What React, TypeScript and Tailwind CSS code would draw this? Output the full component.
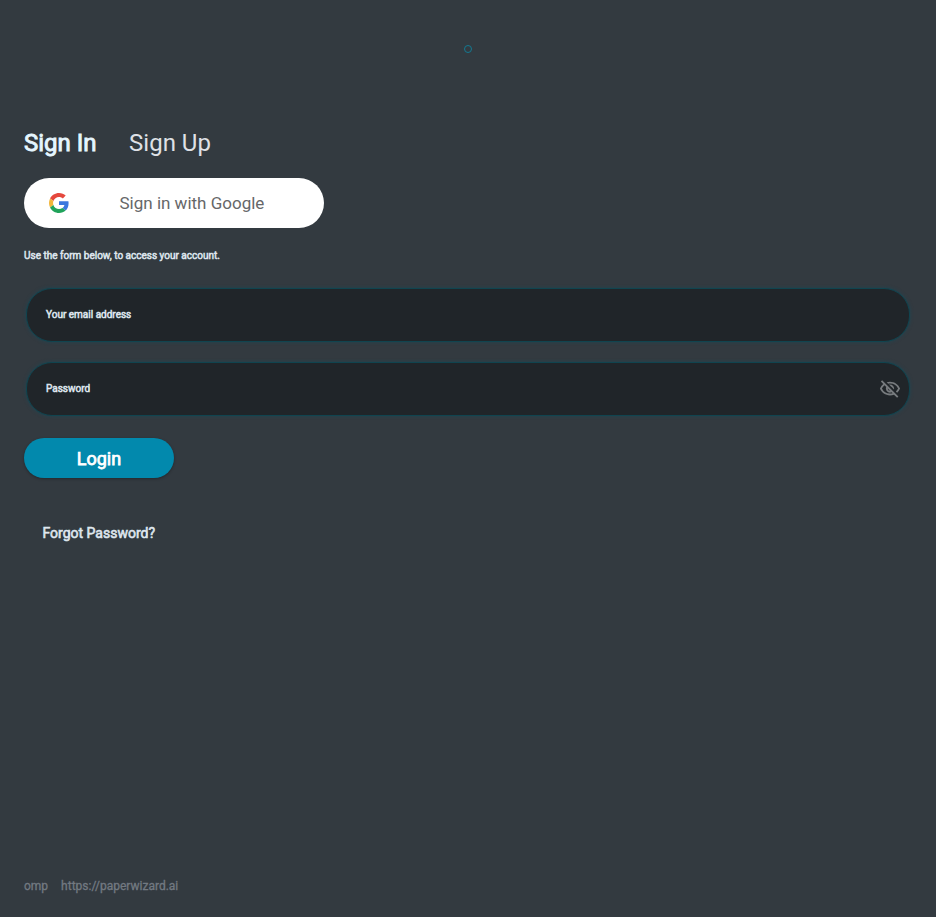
import { MdOutlineVisibilityOff } from "react-icons/md";

function GoogleLogo() {
  return (
    <svg viewBox="0 0 48 48" className="size-5 shrink-0">
      <path fill="#E5483D" d="M24 9.5c3.54 0 6.71 1.22 9.21 3.6l6.85-6.85C35.9 2.38 30.47 0 24 0 14.62 0 6.51 5.38 2.56 13.22l7.98 6.19C12.43 13.72 17.74 9.5 24 9.5z" />
      <path fill="#3B78DE" d="M46.98 24.55c0-1.57-.15-3.09-.38-4.55H24v9.02h12.94c-.58 2.96-2.26 5.48-4.78 7.18l7.73 6c4.51-4.18 7.09-10.36 7.09-17.65z" />
      <path fill="#F2B63A" d="M10.53 28.59c-.48-1.45-.76-2.99-.76-4.59s.27-3.14.76-4.59l-7.98-6.19C.92 16.46 0 20.12 0 24c0 3.88.92 7.54 2.56 10.78l7.97-6.19z" />
      <path fill="#20A35A" d="M24 48c6.48 0 11.93-2.13 15.89-5.81l-7.73-6c-2.15 1.45-4.92 2.3-8.16 2.3-6.26 0-11.57-4.22-13.47-9.91l-7.98 6.19C6.51 42.62 14.62 48 24 48z" />
    </svg>
  );
}

function Field({ label, secret }: { label: string; secret?: boolean }) {
  return (
    <div className="flex h-[54px] items-center justify-between rounded-[26px] border border-[#10444f] bg-[#202529] pr-[8px] pl-[19px] shadow-[0_0_3px_1px_#26414b]">
      <span className="scale-y-[1.12] text-[10px] leading-4 text-[#dfe6ee] [-webkit-text-stroke:0.5px]">{label}</span>
      {secret && <MdOutlineVisibilityOff className="size-[22px] text-[#777b7e]" />}
    </div>
  );
}

export default function App() {
  return (
    <main className="flex h-[917px] flex-col bg-[#333a40] px-6 font-[Roboto,sans-serif] text-[#dfe6ee]">
      <div className="flex h-[97px] items-center justify-center">
        <div className="size-2 rounded-full border border-[#137991]" />
      </div>
      <nav className="mt-[30px] flex h-8 items-center gap-[32.5px] text-2xl">
        <span className="text-[#e5f6ff] [-webkit-text-stroke:0.9px]">Sign In</span>
        <span className="text-[#dfe1e6]">Sign Up</span>
      </nav>
      <button className="mt-[19px] flex h-[50px] w-[300px] items-center rounded-full bg-white pl-[25px] text-[#666769]">
        <GoogleLogo />
        <span className="ml-[50.5px] pt-0.5 text-[17px]">Sign in with Google</span>
      </button>
      <p className="mt-5 scale-y-[1.12] text-[10px] leading-4 [-webkit-text-stroke:0.5px]">Use the form below, to access your account.</p>
      <form className="mt-6 mr-[2px] ml-[2px] flex flex-col gap-5">
        <Field label="Your email address" />
        <Field label="Password" secret />
      </form>
      <button className="mt-[22px] h-10 w-[150px] rounded-full bg-[#0289ad] pt-0.5 text-lg text-white shadow-[0_1px_3px_#00000050] [-webkit-text-stroke:0.75px]">Login</button>
      <a className="mt-[45px] ml-[18.5px] scale-y-[1.06] text-sm leading-5 [-webkit-text-stroke:0.6px]">Forgot Password?</a>
      <footer className="mt-auto mb-[23px] flex gap-[13px] text-xs leading-4 text-[#727981] [-webkit-text-stroke:0.3px]">
        <span>omp</span>
        <span>https://paperwizard.ai</span>
      </footer>
    </main>
  );
}
